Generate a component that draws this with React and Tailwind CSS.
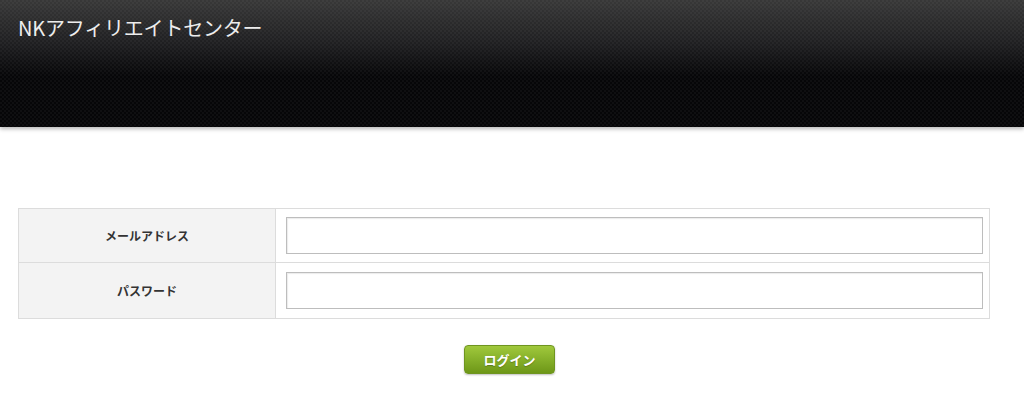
import { useState } from 'react'

export default function App() {
  const [email, setEmail] = useState('')
  const [password, setPassword] = useState('')

  return (
    <div className="min-h-[397px] bg-white font-['Noto_Sans_CJK_JP',sans-serif]">
      <header className="h-[127px] bg-[conic-gradient(rgba(255,255,255,0.035)_25%,transparent_0_50%,rgba(255,255,255,0.035)_0_75%,transparent_0),linear-gradient(#383838_0%,#1e1e20_35%,#060608_60%,#060608_100%)] bg-[length:4px_4px,100%_100%] shadow-[0_2px_4px_rgba(0,0,0,0.28)]">
        <h1 className="pl-[18px] pt-[14px] text-[20px] leading-[28px] text-[#ededed] tracking-[-0.2px]">
          NKアフィリエイトセンター
        </h1>
      </header>

      <main className="px-[18px] pt-[81px]">
        <div className="w-[972px] border border-[#dcdcdc]">
          <div className="flex h-[54px] border-b border-[#dcdcdc]">
            <div className="w-[257px] shrink-0 bg-[#f3f3f3] border-r border-[#dcdcdc] flex items-center justify-center text-[12px] font-bold text-[#333]">
              メールアドレス
            </div>
            <div className="flex-1 pl-[10px] pr-[6px] flex items-center">
              <input
                type="text"
                value={email}
                onChange={(e) => setEmail(e.target.value)}
                className="w-full h-[37px] border border-[#bdbdbd] shadow-[inset_1px_1px_1px_rgba(0,0,0,0.08)] outline-none px-2 text-[13px]"
              />
            </div>
          </div>
          <div className="flex h-[55px]">
            <div className="w-[257px] shrink-0 bg-[#f3f3f3] border-r border-[#dcdcdc] flex items-center justify-center text-[12px] font-bold text-[#333]">
              パスワード
            </div>
            <div className="flex-1 pl-[10px] pr-[6px] flex items-center">
              <input
                type="password"
                value={password}
                onChange={(e) => setPassword(e.target.value)}
                className="w-full h-[37px] border border-[#bdbdbd] shadow-[inset_1px_1px_1px_rgba(0,0,0,0.08)] outline-none px-2 text-[13px]"
              />
            </div>
          </div>
        </div>

        <div className="flex justify-center pt-[26px] pr-[5px]">
          <button className="w-[91px] h-[29px] rounded-[4px] border border-[#6f9520] bg-[linear-gradient(#a0c83c,#86b02a_50%,#6e9718)] text-white text-[13px] font-bold shadow-[0_1px_2px_rgba(0,0,0,0.25)] [text-shadow:0_1px_1px_rgba(0,0,0,0.25)]">
            ログイン
          </button>
        </div>
      </main>
    </div>
  )
}
